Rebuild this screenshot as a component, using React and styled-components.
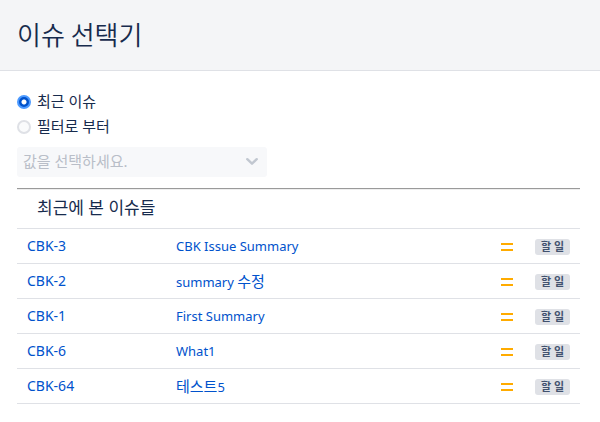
import React, { useState } from 'react';
import styled, { createGlobalStyle } from 'styled-components';

const GlobalStyle = createGlobalStyle`
	* {
		box-sizing: border-box;
	}
	body {
		margin: 0;
		background: #ffffff;
		color: #172b4d;
		font-family: 'Noto Sans', 'Noto Sans CJK KR', sans-serif;
		font-size: 15px;
		line-height: 20px;
	}
`;

const Header = styled.header`
	padding: 14px 17px 16px;
	background: #f4f5f7;
	border-bottom: 1px solid #dfe1e6;

	h1 {
		margin: 0;
		font-family: 'Noto Sans CJK KR', sans-serif;
		font-size: 26px;
		font-weight: 350;
		line-height: 40px;
	}
`;

const Content = styled.main`
	padding: 18px 20px 18px 17px;
`;

const RadioLabel = styled.label`
	display: flex;
	align-items: center;
	gap: 6px;
	height: 25px;
	cursor: pointer;

	span {
		padding-bottom: 2px;
	}
`;

const Radio = styled.input`
	appearance: none;
	width: 14px;
	height: 14px;
	margin: 0;
	border: 2px solid #dfe1e6;
	border-radius: 50%;
	background: #fafbfc;

	&:checked {
		border-color: #4c9aff;
		background: radial-gradient(circle, #ffffff 2px, #0052cc 3px);
		background-origin: border-box;
	}
`;

const SelectBlock = styled.div`
	display: grid;
	align-items: center;
	width: 250px;
	margin-top: 8px;

	select,
	svg {
		grid-area: 1 / 1;
	}
	select {
		appearance: none;
		width: 100%;
		height: 30px;
		padding: 0 32px 2px 6px;
		border: 0;
		border-radius: 3px;
		background: #f7f8fa;
		color: #b9bec8;
		font: inherit;
		opacity: 1;
	}
	svg {
		justify-self: end;
		margin-right: 9px;
		pointer-events: none;
	}
`;

const Divider = styled.hr`
	height: 2px;
	margin: 11px 0 0;
	border: 0;
	border-top: 1px solid #9a9a9a;
	border-bottom: 1px solid #eeeeee;
`;

const ListTitle = styled.h2`
	margin: 0;
	padding: 6px 20px 8px;
	font-size: 17px;
	font-weight: 400;
	line-height: 24px;
`;

const IssueTable = styled.table`
	width: 100%;
	border-collapse: collapse;
	border-top: 1px solid #dfe1e6;
	table-layout: fixed;
`;

const IssueRow = styled.tr`
	border-bottom: 1px solid #dfe1e6;
`;

const Cell = styled.td`
	width: ${props => props.$width || 'auto'};
	height: 35px;
	padding: 0 10px;
	font-size: 14px;

	svg {
		display: block;
		margin-left: auto;
	}
`;

const IssueLink = styled.a`
	color: #0052cc;
	font-size: 13px;
	text-decoration: none;

	/* 한글은 영문보다 작게 보여서 조금 키움 */
	span {
		font-size: 15px;
	}
	&:hover {
		text-decoration: underline;
	}
`;

const KeyLink = styled(IssueLink)`
	font-size: 14px;
`;

const Status = styled.span`
	display: block;
	margin-top: 2px;
	border-radius: 3px;
	background: #dfe1e6;
	color: #42526e;
	font-size: 11px;
	font-weight: 700;
	line-height: 16px;
	text-align: center;
`;

const PriorityIcon = () => (
	<svg width="16" height="16" viewBox="0 0 16 16" role="img" aria-label="Medium">
		<path d="M2 5h12v2H2zM2 11h12v2H2z" fill="#ffab00" />
	</svg>
);

const ChevronIcon = () => (
	<svg width="12" height="12" viewBox="0 0 12 12" fill="none" aria-hidden="true">
		<path
			d="M1.3 3.2L6 7.7l4.7-4.5"
			stroke="#c1c7d0"
			strokeWidth="2.4"
			strokeLinecap="round"
			strokeLinejoin="round"
		/>
	</svg>
);

const sources = [
	{ value: 'recent', text: '최근 이슈' },
	{ value: 'filter', text: '필터로 부터' },
];

const issues = [
	{ key: 'CBK-3', summary: 'CBK Issue Summary', status: '할 일' },
	{ key: 'CBK-2', summary: 'summary 수정', status: '할 일' },
	{ key: 'CBK-1', summary: 'First Summary', status: '할 일' },
	{ key: 'CBK-6', summary: 'What1', status: '할 일' },
	{ key: 'CBK-64', summary: '테스트5', status: '할 일' },
];

const Summary = ({ text }) =>
	text
		.split(/([가-힣]+)/)
		.map((part, i) => (i % 2 ? <span key={i} lang="ko">{part}</span> : part));

const IssueItem = ({ issue }) => {
	const { key, summary, status } = issue;
	return (
		<IssueRow>
			<Cell $width="149px">
				<KeyLink href={`#${key}`}>{key}</KeyLink>
			</Cell>
			<Cell>
				<IssueLink href={`#${key}`}>
					<Summary text={summary} />
				</IssueLink>
			</Cell>
			<Cell $width="36px">
				<PriorityIcon />
			</Cell>
			<Cell $width="55px">
				<Status>{status}</Status>
			</Cell>
		</IssueRow>
	);
};

const App = () => {
	const [source, setSource] = useState('recent');
	return (
		<>
			<GlobalStyle />
			<Header>
				<h1>이슈 선택기</h1>
			</Header>
			<Content>
				{sources.map(({ value, text }) => (
					<RadioLabel key={value}>
						<Radio
							type="radio"
							name="source"
							value={value}
							checked={source === value}
							onChange={() => setSource(value)}
						/>
						<span>{text}</span>
					</RadioLabel>
				))}
				<SelectBlock>
					<select aria-label="필터" disabled={source !== 'filter'}>
						<option>값을 선택하세요.</option>
					</select>
					<ChevronIcon />
				</SelectBlock>
				<Divider />
				<ListTitle>최근에 본 이슈들</ListTitle>
				<IssueTable>
					<tbody>
						{issues.map(issue => (
							<IssueItem key={issue.key} issue={issue} />
						))}
					</tbody>
				</IssueTable>
			</Content>
		</>
	);
};

export default App;
